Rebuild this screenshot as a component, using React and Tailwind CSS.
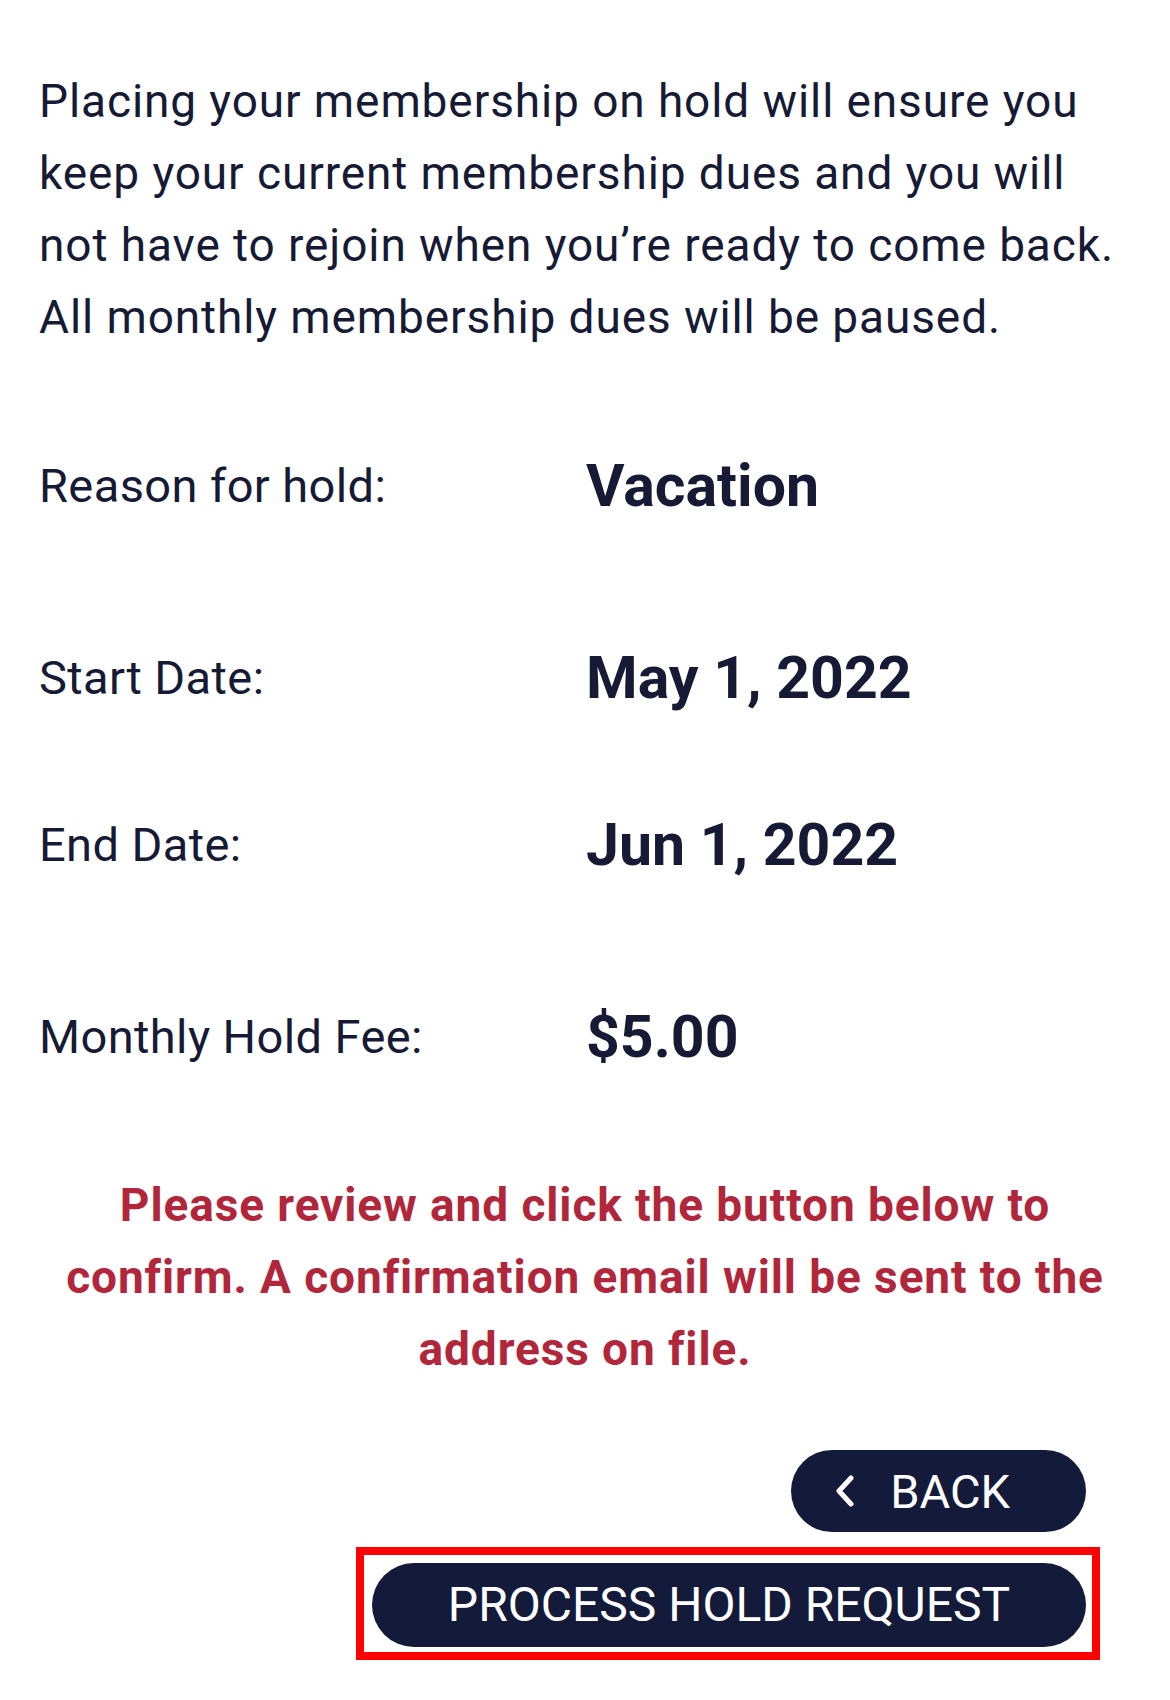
const NAVY = 'text-[#161a35]'

const rows = [
  { label: 'Reason for hold:', value: 'Vacation', gap: 'mt-[93px]' },
  { label: 'Start Date:', value: 'May 1, 2022', gap: 'mt-[112px]' },
  { label: 'End Date:', value: 'Jun 1, 2022', gap: 'mt-[87px]' },
  { label: 'Monthly Hold Fee:', value: '$5.00', gap: 'mt-[112px]' },
]

export default function App() {
  return (
    <div className="min-h-[1700px] w-[1170px] bg-white font-['Roboto',sans-serif]">
      <div className="px-[39px] pt-[65px]">
        <p className={`text-[46px] leading-[72px] tracking-[0.9px] ${NAVY}`}>
          Placing your membership on hold will ensure you<br />
          keep your current membership dues and you will<br />
          not have to rejoin when you’re ready to come back.<br />
          All monthly membership dues will be paused.
        </p>

        {rows.map((row) => (
          <div key={row.label} className={`${row.gap} flex h-[80px] items-center`}>
            <div className={`w-[547px] text-[47px] tracking-[0.4px] ${NAVY}`}>{row.label}</div>
            <div className={`text-[59px] font-bold ${NAVY}`}>{row.value}</div>
          </div>
        ))}
      </div>

      <p className="mt-[92px] text-center text-[46px] font-bold leading-[72px] tracking-[0.9px] text-[#b1263a]">
        Please review and click the button below to<br />
        confirm. A confirmation email will be sent to the<br />
        address on file.
      </p>

      <div className="mt-[65px] flex flex-col items-end pr-[70px]">
        <button className="mr-[14px] flex h-[82px] items-center rounded-full bg-[#141a3a] pl-[43px] pr-[76px] text-[47px] text-white">
          <svg width="22" height="32" viewBox="0 0 22 32" fill="none" stroke="currentColor" strokeWidth="5" strokeLinecap="round" strokeLinejoin="round">
            <path d="M17 3 L5 16 L17 29" />
          </svg>
          <span className="ml-[34px] leading-none">BACK</span>
        </button>

        <div className="mt-[15px] border-[8px] border-[#ff0000] pb-[5px] pl-[8px] pr-[6px] pt-[8px]">
          <button className="flex h-[84px] w-[714px] items-center justify-center rounded-full bg-[#141a3a] text-[48px] text-white">
            PROCESS HOLD REQUEST
          </button>
        </div>
      </div>
    </div>
  )
}
